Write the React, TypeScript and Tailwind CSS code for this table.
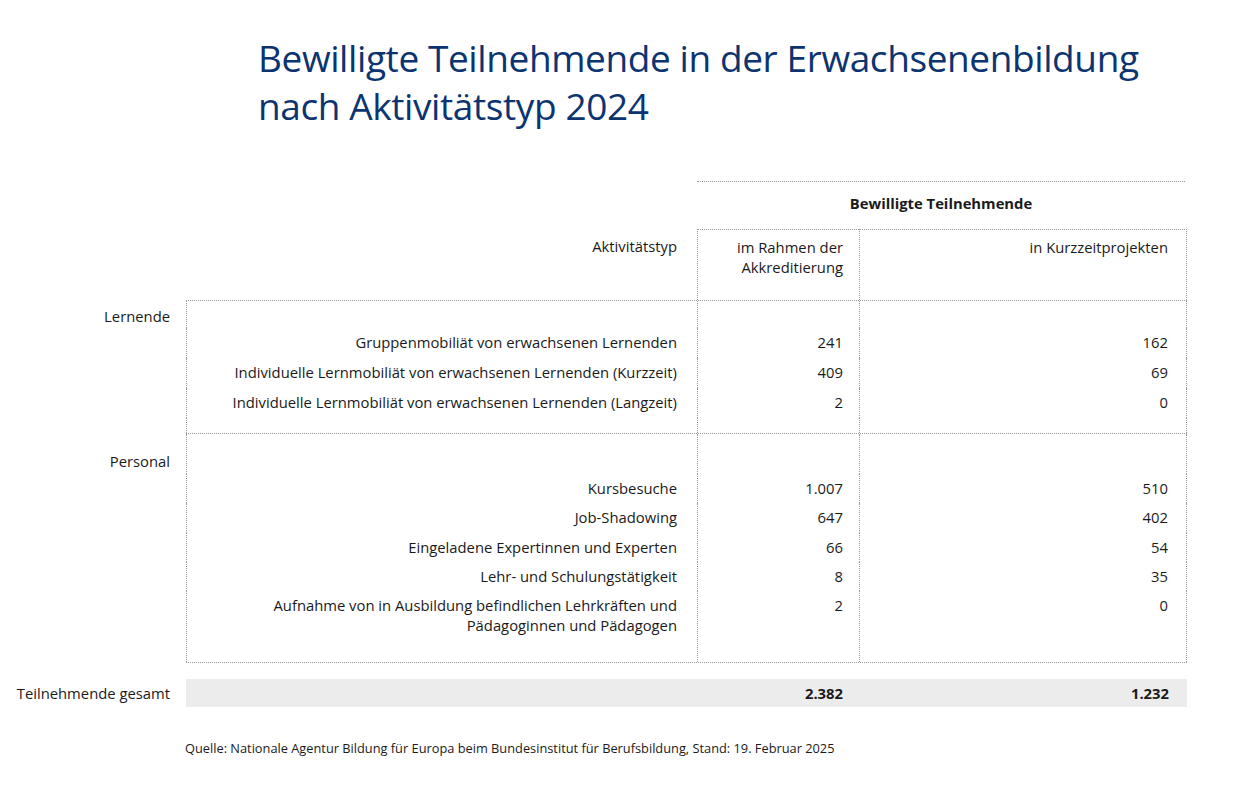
import React from "react";

const bd = "border-dotted border-[#9a9a9a]";

type RowProps = {
  label?: string;
  name?: React.ReactNode;
  a?: string;
  b?: string;
  h: string;
  top?: string;
};

function Row({ label, name, a, b, h, top = "pt-0" }: RowProps) {
  return (
    <div className={`flex ${h}`}>
      <div className={`w-[186px] shrink-0 pr-4 text-right ${top}`}>{label}</div>
      <div className={`w-[511px] shrink-0 border-l ${bd} pr-5 text-right ${top}`}>{name}</div>
      <div className={`w-[162px] shrink-0 border-l ${bd} pr-4 text-right ${top}`}>{a}</div>
      <div className={`w-[328px] shrink-0 border-x ${bd} pr-[18px] text-right ${top}`}>{b}</div>
    </div>
  );
}

const lernende = [
  ["Gruppenmobiliät von erwachsenen Lernenden", "241", "162"],
  ["Individuelle Lernmobiliät von erwachsenen Lernenden (Kurzzeit)", "409", "69"],
  ["Individuelle Lernmobiliät von erwachsenen Lernenden (Langzeit)", "2", "0"],
];

const personal = [
  ["Kursbesuche", "1.007", "510"],
  ["Job-Shadowing", "647", "402"],
  ["Eingeladene Expertinnen und Experten", "66", "54"],
  ["Lehr- und Schulungstätigkeit", "8", "35"],
];

export default function App() {
  return (
    <div
      className="w-[1240px] h-[810px] bg-white text-[#1a1a1a] text-[14.8px] leading-5"
      style={{ fontFamily: '"Open Sans", "Noto Sans", sans-serif' }}
    >
      <h1 className="pl-[258px] pt-[34px] text-[37px] leading-[48px] tracking-[-0.4px] text-[#0b3470]">
        Bewilligte Teilnehmende in der Erwachsenenbildung
        <br />
        nach Aktivitätstyp 2024
      </h1>

      <div className="mt-[51px]">
        {/* group header */}
        <div className="flex">
          <div className="w-[697px] shrink-0" />
          <div className={`w-[488px] border-t ${bd} h-[48px] pt-[11px] text-center font-bold`}>
            Bewilligte Teilnehmende
          </div>
        </div>

        {/* column header */}
        <div className="flex h-[71px]">
          <div className="w-[697px] shrink-0 pr-5 pt-[7px] text-right">Aktivitätstyp</div>
          <div className={`w-[162px] shrink-0 border-t border-l ${bd} pr-4 pt-[7px] text-right`}>
            im Rahmen der
            <br />
            Akkreditierung
          </div>
          <div className={`w-[328px] shrink-0 border-t border-x ${bd} pr-[18px] pt-[7px] text-right`}>
            in Kurzzeitprojekten
          </div>
        </div>

        {/* Lernende */}
        <div className="flex">
          <div className="w-[186px] shrink-0" />
          <div className={`w-[1001px] border-t ${bd}`} />
        </div>
        <Row label="Lernende" h="h-[27px]" top="pt-[5px]" />
        {lernende.map(([n, a, b]) => (
          <Row key={n} name={n} a={a} b={b} h="h-[30px]" top="pt-[4px]" />
        ))}
        <Row h="h-[15px]" />

        {/* Personal */}
        <div className="flex">
          <div className="w-[186px] shrink-0" />
          <div className={`w-[1001px] border-t ${bd}`} />
        </div>
        <Row label="Personal" h="h-[40px]" top="pt-[17px]" />
        {personal.map(([n, a, b]) => (
          <Row key={n} name={n} a={a} b={b} h="h-[29.3px]" top="pt-[4px]" />
        ))}
        <Row
          name={
            <span className="leading-[19px]">
              Aufnahme von in Ausbildung befindlichen Lehrkräften und
              <br />
              Pädagoginnen und Pädagogen
            </span>
          }
          a="2"
          b="0"
          h="h-[71px]"
          top="pt-[4px]"
        />
        <div className="flex">
          <div className="w-[186px] shrink-0" />
          <div className={`w-[1001px] border-t ${bd}`} />
        </div>

        {/* total */}
        <div className="mt-[16px] flex h-[28px] items-center">
          <div className="w-[186px] shrink-0 pr-4 text-right">Teilnehmende gesamt</div>
          <div className="flex h-full w-[1001px] items-center bg-[#ececec] font-bold">
            <div className="w-[511px] shrink-0" />
            <div className="w-[162px] shrink-0 pr-4 text-right">2.382</div>
            <div className="w-[328px] shrink-0 pr-[18px] text-right">1.232</div>
          </div>
        </div>

        <p className="mt-[31px] pl-[185px] text-[12.8px]">
          Quelle: Nationale Agentur Bildung für Europa beim Bundesinstitut für Berufsbildung, Stand: 19. Februar 2025
        </p>
      </div>
    </div>
  );
}
